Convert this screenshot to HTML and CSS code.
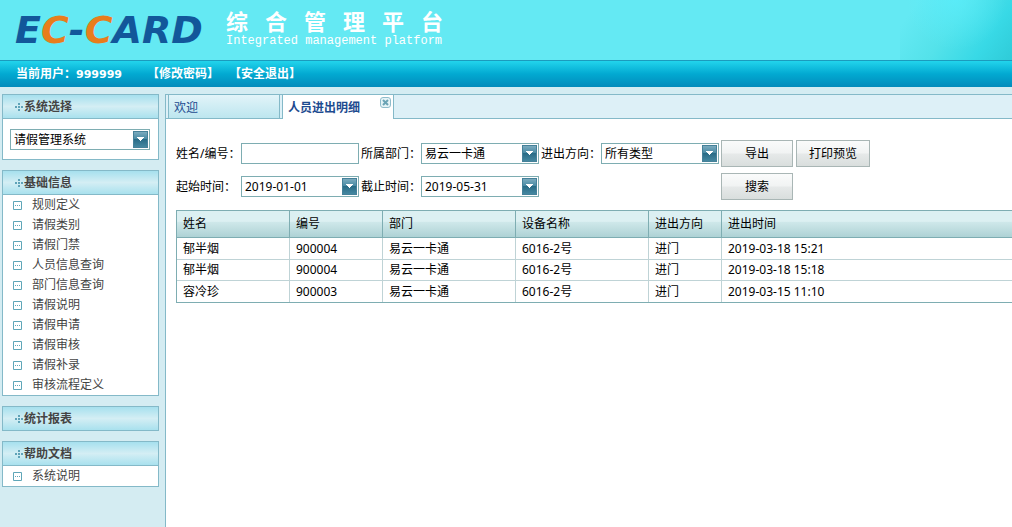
FILE: index.html
```html
<!DOCTYPE html>
<html lang="zh-CN">
<head>
<meta charset="utf-8">
<title>综合管理平台</title>
<link rel="stylesheet" href="styles.css">
</head>
<body>
<header class="banner">
  <svg class="logo" width="200" height="44" viewBox="0 0 200 44" role="img" aria-label="EC-CARD">
    <text class="logo-text" x="0" y="36"><tspan>E</tspan><tspan class="logo-accent">C</tspan><tspan>-</tspan><tspan class="logo-accent">C</tspan><tspan>ARD</tspan></text>
  </svg>
  <div class="brand">
    <h1 class="brand-title">综合管理平台</h1>
    <p class="brand-sub">Integrated management platform</p>
  </div>
</header>
<nav class="userbar">
  <span>当前用户：<b class="user-id">999999</b></span>
  <a class="userbar-link first" href="#">【修改密码】</a>
  <a class="userbar-link" href="#">【安全退出】</a>
</nav>
<svg class="defs" width="0" height="0" aria-hidden="true">
  <symbol id="cross" viewBox="0 0 8 8"><path fill="#5fa3b8" d="M3 0h2v2H3zM0 3h2v2H0zM3 3h2v2H3zM6 3h2v2H6zM3 6h2v2H3z"/></symbol>
  <symbol id="node" viewBox="0 0 9 9"><path fill="#fff" stroke="#5fa6b8" d="M.5.5h8v8h-8z"/><path fill="#5fa6b8" d="M2 4h1v1H2zM4 4h1v1H4zM6 4h1v1H6z"/></symbol>
</svg>
<div class="layout">
  <aside class="sidebar">
    <section class="box">
      <h2 class="box-head"><svg class="cross"><use href="#cross"/></svg>系统选择</h2>
      <div class="box-body">
        <select class="field combo" aria-label="系统选择"><option>请假管理系统</option></select>
      </div>
    </section>
    <section class="box">
      <h2 class="box-head"><svg class="cross"><use href="#cross"/></svg>基础信息</h2>
      <ul class="menu">
        <li><a href="#"><svg class="node"><use href="#node"/></svg>规则定义</a></li>
        <li><a href="#"><svg class="node"><use href="#node"/></svg>请假类别</a></li>
        <li><a href="#"><svg class="node"><use href="#node"/></svg>请假门禁</a></li>
        <li><a href="#"><svg class="node"><use href="#node"/></svg>人员信息查询</a></li>
        <li><a href="#"><svg class="node"><use href="#node"/></svg>部门信息查询</a></li>
        <li><a href="#"><svg class="node"><use href="#node"/></svg>请假说明</a></li>
        <li><a href="#"><svg class="node"><use href="#node"/></svg>请假申请</a></li>
        <li><a href="#"><svg class="node"><use href="#node"/></svg>请假审核</a></li>
        <li><a href="#"><svg class="node"><use href="#node"/></svg>请假补录</a></li>
        <li><a href="#"><svg class="node"><use href="#node"/></svg>审核流程定义</a></li>
      </ul>
    </section>
    <section class="box">
      <h2 class="box-head"><svg class="cross"><use href="#cross"/></svg>统计报表</h2>
    </section>
    <section class="box">
      <h2 class="box-head"><svg class="cross"><use href="#cross"/></svg>帮助文档</h2>
      <ul class="menu">
        <li><a href="#"><svg class="node"><use href="#node"/></svg>系统说明</a></li>
      </ul>
    </section>
  </aside>
  <main class="panel">
    <div class="tabs">
      <a class="tab" href="#">欢迎</a>
      <div class="tab active"><a href="#">人员进出明细</a>
        <button class="tab-close" type="button" aria-label="关闭">
          <svg width="11" height="11" viewBox="0 0 11 11"><rect x=".5" y=".5" width="10" height="10" rx="2.5" fill="#e6f4f7" stroke="#8fbccb"/><path d="M3 3l5 5M8 3l-5 5" stroke="#6ba3b5" stroke-width="2"/></svg>
        </button>
      </div>
    </div>
    <div class="content">
      <form class="filters">
        <label for="who">姓名/编号：</label>
        <input class="field" id="who" type="text">
        <label for="dept">所属部门：</label>
        <select class="field combo" id="dept"><option>易云一卡通</option></select>
        <label for="dir">进出方向：</label>
        <select class="field combo" id="dir"><option>所有类型</option></select>
        <div class="actions">
          <button class="btn" type="button">导出</button>
          <button class="btn wide" type="button">打印预览</button>
        </div>
        <label for="from">起始时间：</label>
        <input class="field combo" id="from" type="text" value="2019-01-01">
        <label for="to">截止时间：</label>
        <input class="field combo" id="to" type="text" value="2019-05-31">
        <div class="actions search"><button class="btn" type="button">搜索</button></div>
      </form>
      <table class="grid">
        <colgroup><col class="c-name"><col class="c-no"><col class="c-dept"><col class="c-dept"><col class="c-dir"><col></colgroup>
        <thead><tr><th>姓名</th><th>编号</th><th>部门</th><th>设备名称</th><th>进出方向</th><th>进出时间</th></tr></thead>
        <tbody>
          <tr><td>郁半烟</td><td>900004</td><td>易云一卡通</td><td>6016-2号</td><td>进门</td><td>2019-03-18 15:21</td></tr>
          <tr><td>郁半烟</td><td>900004</td><td>易云一卡通</td><td>6016-2号</td><td>进门</td><td>2019-03-18 15:18</td></tr>
          <tr><td>容冷珍</td><td>900003</td><td>易云一卡通</td><td>6016-2号</td><td>进门</td><td>2019-03-15 11:10</td></tr>
        </tbody>
      </table>
    </div>
  </main>
</div>
</body>
</html>
```

FILE: styles.css
```css
* { box-sizing: border-box; }

body {
  margin: 0;
  min-height: 100vh;
  display: flex;
  flex-direction: column;
  background: #d4ecf2;
  font: 12px/20px "Noto Sans", "Noto Sans CJK SC", sans-serif;
  color: #000;
}

a { color: inherit; text-decoration: none; }
h1, h2, p, ul { margin: 0; padding: 0; }
ul { list-style: none; }
button, input, select { font: inherit; color: inherit; }
.defs { position: absolute; }

/* Banner */
.banner {
  display: flex;
  gap: 11px;
  height: 60px;
  padding: 7px 0 0 15px;
  background:
    radial-gradient(ellipse 50px 50px at 50% 0, rgba(90, 240, 255, .6), transparent) right / 112px 100% no-repeat,
    linear-gradient(125deg, #64e9f3 12%, #54e2ea 45%, #38d9e6 75%, #2fcbd8) right / 112px 100% no-repeat,
    #64e9f3;
}
.logo { flex: none; }
.logo-text {
  font: italic bold 38px "DejaVu Sans", sans-serif;
  fill: #12579a;
}
.logo-accent { fill: #e87d1c; }
.brand { width: 217px; color: #fff; }
.brand-title {
  font: bold 22px/27px "Noto Sans CJK SC", sans-serif;
  text-align: justify;
  text-align-last: justify;
}
.brand-sub {
  padding-top: 1px;
  font: 12px/12px "Liberation Mono", monospace;
  white-space: nowrap;
}

/* User bar */
.userbar {
  display: flex;
  height: 27px;
  padding-left: 16px;
  border-top: 1px solid #1b9bbd;
  background: linear-gradient(#22d4ec, #02a9d1 50%, #028bbb);
  color: #fff;
  font-weight: bold;
  line-height: 25px;
}
.user-id { font-family: "DejaVu Sans", sans-serif; font-size: 11px; }
.userbar-link { margin-left: 10px; }
.userbar-link.first { margin-left: 25px; }

/* Page frame */
.layout {
  flex: 1;
  display: flex;
  gap: 6px;
  padding: 7px 0 0 2px;
}
.sidebar {
  flex: none;
  width: 157px;
  display: flex;
  flex-direction: column;
  gap: 10px;
}
.box { border: 1px solid #84b9c8; background: #fff; }
.box-head {
  display: flex;
  align-items: center;
  gap: 1px;
  height: 23px;
  padding-left: 12px;
  background: linear-gradient(#a6e0ee, #d4eef4 50%, #a9e1ee);
  color: #444;
  font-size: 12px;
}
.box-head + * { border-top: 1px solid #84b9c8; }
.cross { width: 8px; height: 8px; }
.box-body { padding: 10px 8px 9px 7px; }
.box-body .field { display: block; width: 100%; }
.menu a {
  display: flex;
  align-items: center;
  gap: 10px;
  height: 20px;
  padding-left: 10px;
  color: #444;
}
.node { width: 9px; height: 9px; }

/* Tabs */
.panel {
  flex: 1;
  min-width: 0;
  border: solid #84b9c8;
  border-width: 1px 0 0 1px;
  background: #fff;
}
.tabs {
  display: flex;
  gap: 2px;
  height: 24px;
  padding-left: 2px;
  border-bottom: 1px solid #84b9c8;
  background: #ddf0f7;
  color: #1d4b8f;
}
.tab {
  position: relative;
  width: 112px;
  padding-left: 5px;
  border: solid #84b9c8;
  border-width: 0 1px;
  background: linear-gradient(#e2f4f9, #bde6ef);
  line-height: 25px;
}
.tab.active {
  height: 24px;
  background: #fff;
  font-weight: bold;
}
.tab-close {
  position: absolute;
  top: 2px;
  right: 2px;
  display: flex;
  padding: 0;
  border: 0;
  background: none;
}

/* Filters */
.content { padding: 21px 0 0 10px; }
.filters {
  display: grid;
  grid-template-columns: 65px 118px 62px 118px 62px 118px 1fr;
  grid-auto-rows: 27px;
  row-gap: 6px;
  align-items: center;
}
.filters label { padding-left: 2px; white-space: nowrap; }
.filters label[for="who"], .filters label[for="from"] { padding-left: 0; }
.field {
  width: 118px;
  height: 21px;
  margin: 0;
  padding: 0 4px 0 3px;
  border: 1px solid #7eadb2;
  border-radius: 0;
  background: #fff;
  line-height: 19px;
}
.combo {
  appearance: none;
  padding-right: 18px;
  background: url("data:image/svg+xml,%3Csvg xmlns='http://www.w3.org/2000/svg' width='15' height='17'%3E%3Cdefs%3E%3ClinearGradient id='g' x2='0' y2='1'%3E%3Cstop stop-color='%237fadc0'/%3E%3Cstop offset='.48' stop-color='%234689a3'/%3E%3Cstop offset='.5' stop-color='%23296c87'/%3E%3Cstop offset='1' stop-color='%234789a2'/%3E%3C/linearGradient%3E%3C/defs%3E%3Crect x='.5' y='.5' width='14' height='16' fill='url(%23g)' stroke='%23468199'/%3E%3Cpath d='M4 6h7v1h-1v1H9v1H8v1H7v-1H6V8H5V7H4z' fill='%23fff'/%3E%3C/svg%3E") right 1px center no-repeat #fff;
}
.actions { display: flex; gap: 3px; margin-left: 2px; }
.actions.search { grid-column: 7; }
.btn {
  width: 72px;
  height: 27px;
  padding: 0;
  border: 1px solid #a9b6b5;
  background: linear-gradient(#fafbfb, #f1f3f3 48%, #e6e9e9 52%, #d9dedd);
}
.btn.wide { width: 74px; }

/* Records */
.grid {
  width: 100%;
  margin-top: 10px;
  table-layout: fixed;
  border-collapse: separate;
  border-spacing: 0;
  border: solid #7eadb2;
  border-width: 1px 0 1px 1px;
}
.c-name { width: 113px; }
.c-no { width: 93px; }
.c-dept { width: 133px; }
.c-dir { width: 73px; }
.grid th, .grid td {
  padding: 0 6px;
  text-align: left;
  font-weight: normal;
  white-space: nowrap;
}
.grid th {
  height: 27px;
  border-right: 1px solid #7eadb2;
  border-bottom: 1px solid #7eadb2;
  background: linear-gradient(#dcf0f2 40%, #cfe8ea 42%, #aed2d5);
}
.grid td {
  height: 21px;
  line-height: 20px;
  border-right: 1px solid #bfd3d6;
  border-bottom: 1px solid #bfd3d6;
}
.grid tbody tr:first-child td { height: 22px; }
.grid tr:last-child td { border-bottom: 0; }
.grid th:last-child, .grid td:last-child { border-right: 0; }
```
